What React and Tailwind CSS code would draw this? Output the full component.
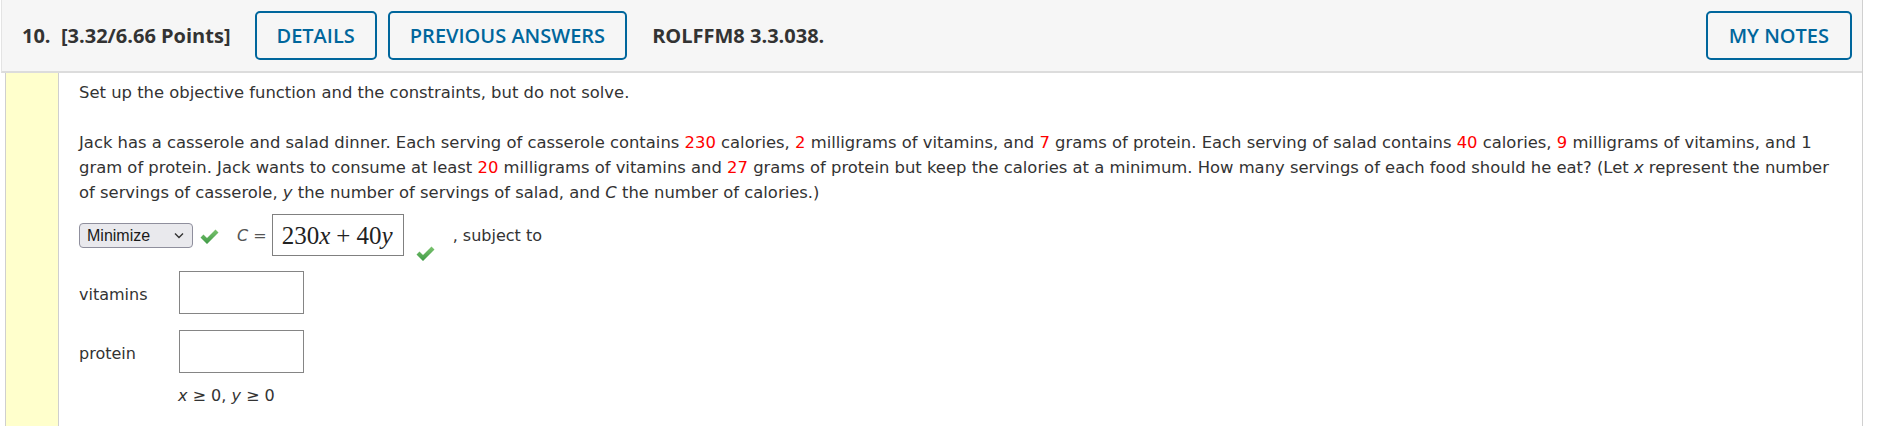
import React from "react";

function Check({ className = "" }) {
  return (
    <svg width="19" height="16" viewBox="0 0 19 16" className={className}>
      <defs>
        <linearGradient id="cg" x1="0" y1="0" x2="0" y2="1">
          <stop offset="0" stopColor="#7cc46f" />
          <stop offset="1" stopColor="#3f9a46" />
        </linearGradient>
      </defs>
      <path d="M0.5 8.5 L3.5 5.5 L7 9 L15.5 0.5 L18.5 3.5 L7 15 Z" fill="url(#cg)" />
    </svg>
  );
}

const R = ({ children }) => <span className="text-[#ff0000]">{children}</span>;

export default function App() {
  return (
    <div className="w-[1882px] h-[426px] bg-white overflow-hidden">
      <div className="w-[1862px] ml-px border-r border-[#d0d0d0]">
        {/* header */}
        <div
          className="h-[73px] bg-[#f6f6f6] border-b-2 border-[#dcdcdc] border-l border-l-[#e4e4e4] flex items-center pl-[20px] pr-[10px] text-[20px] text-[#333333]"
          style={{ fontFamily: '"Open Sans", sans-serif' }}
        >
          <span className="font-bold whitespace-pre">10.  [3.32/6.66 Points]</span>
          <button className="ml-[24px] h-[49px] px-[20px] border-2 border-[#00669c] rounded-[5px] text-[#00669c] font-semibold">
            DETAILS
          </button>
          <button className="ml-[11px] h-[49px] px-[20px] border-2 border-[#00669c] rounded-[5px] text-[#00669c] font-semibold">
            PREVIOUS ANSWERS
          </button>
          <span className="ml-[25px] font-bold">ROLFFM8 3.3.038.</span>
          <button className="ml-auto h-[49px] px-[21px] border-2 border-[#00669c] rounded-[5px] text-[#00669c] font-semibold">
            MY NOTES
          </button>
        </div>
        {/* body */}
        <div className="flex h-[353px]">
          <div className="ml-[4px] w-[54px] bg-[#ffffcc] border-x border-[#cfcfcf]" />
          <div
            className="flex-1 pl-[20px] pr-[10px] pt-[7px] text-[16.4px] leading-[25px] text-[#333333]"
            style={{ fontFamily: '"DejaVu Sans", Verdana, sans-serif' }}
          >
            <p>Set up the objective function and the constraints, but do not solve.</p>
            <p className="mt-[25px]">
              Jack has a casserole and salad dinner. Each serving of casserole contains <R>230</R> calories, <R>2</R>{" "}
              milligrams of vitamins, and <R>7</R> grams of protein. Each serving of salad contains <R>40</R> calories,{" "}
              <R>9</R> milligrams of vitamins, and 1
              <br />
              gram of protein. Jack wants to consume at least <R>20</R> milligrams of vitamins and <R>27</R> grams of
              protein but keep the calories at a minimum. How many servings of each food should he eat? (Let <i>x</i>{" "}
              represent the number
              <br />
              of servings of casserole, <i>y</i> the number of servings of salad, and <i>C</i> the number of calories.)
            </p>
            <div className="mt-[9px] flex items-center h-[42px]">
              <div
                className="w-[114px] h-[25px] rounded-[4px] border border-[#8f8f9d] bg-[#e9e9ed] flex items-center pl-[7px] pr-[8px] text-[16px] text-[#1a1a1a]"
                style={{ fontFamily: '"Liberation Sans", Arial, sans-serif' }}
              >
                <span className="flex-1">Minimize</span>
                <svg width="10" height="7" viewBox="0 0 10 7">
                  <path d="M1 1.5 L5 5.5 L9 1.5" fill="none" stroke="#333" strokeWidth="1.4" />
                </svg>
              </div>
              <Check className="ml-[7px] mt-[3px]" />
              <span className="ml-[18px] text-[#555] text-[16px]">
                <i>C</i> =
              </span>
              <div
                className="ml-[5px] w-[132px] h-[42px] border border-[#808080] flex items-center pl-[9px] text-[25px] text-[#222] whitespace-nowrap"
                style={{ fontFamily: '"Liberation Serif", "Times New Roman", serif' }}
              >
                230<i>x</i>
                <span className="mx-[6px]">+</span>40<i>y</i>
              </div>
              <Check className="ml-[12px] self-end mb-[-6px]" />
              <span className="ml-[18px] text-[16px]">, subject to</span>
            </div>
            <div className="mt-[15px] flex items-center text-[16px]">
              <span className="w-[100px] pt-[3px]">vitamins</span>
              <div className="w-[125px] h-[43px] border border-[#858585]" />
            </div>
            <div className="mt-[16px] flex items-center text-[16px]">
              <span className="w-[100px] pt-[3px]">protein</span>
              <div className="w-[125px] h-[43px] border border-[#858585]" />
            </div>
            <div className="mt-[10px] ml-[99px] text-[16px]">
              <i>x</i> ≥ 0, <i>y</i> ≥ 0
            </div>
          </div>
        </div>
      </div>
    </div>
  );
}
